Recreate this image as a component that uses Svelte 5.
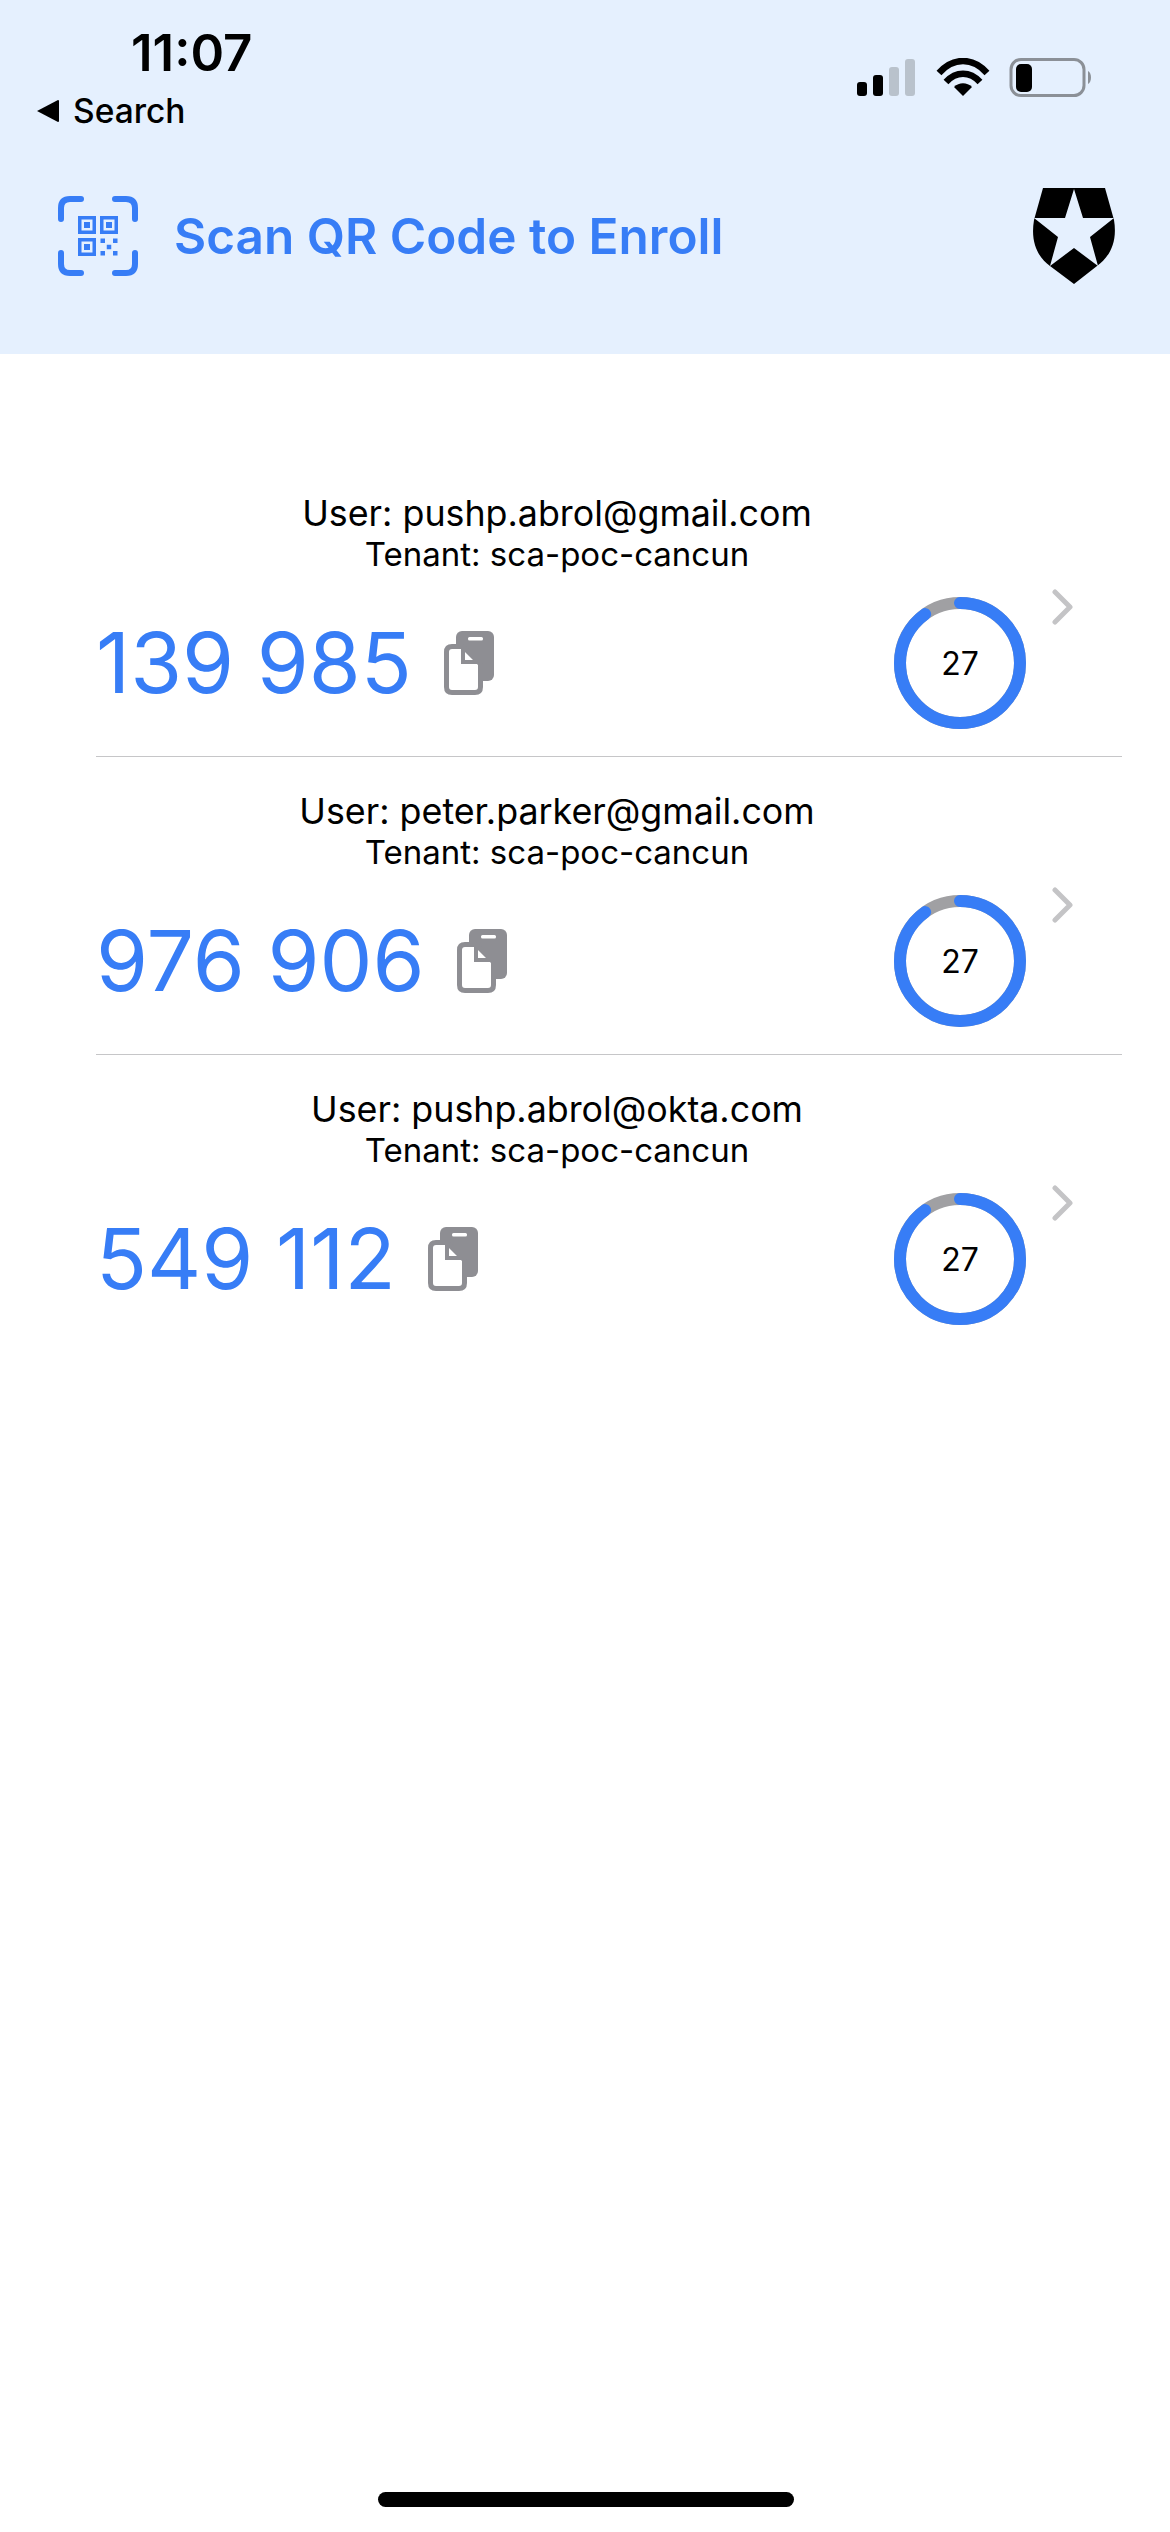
<script>
  const accounts = [
    { user: "pushp.abrol@gmail.com", code: "139 985" },
    { user: "peter.parker@gmail.com", code: "976 906" },
    { user: "pushp.abrol@okta.com", code: "549 112" },
  ];
  const tenant = "sca-poc-cancun";
  const seconds = 27;
  const period = 30;
  const radius = 60;
  const circumference = 2 * Math.PI * radius;
  const dash = (seconds / period) * circumference;

  // little qr modules inside the scan frame
  const qrDots = [
    [42.5, 42.5], [55, 42.5], [48.75, 48.75], [42.5, 55], [55, 55],
  ];
  const qrFinders = [
    [20, 20], [42, 20], [20, 42],
  ];
</script>

<div class="screen">
  <header class="top">
    <div class="status">
      <div class="status-left">
        <div class="time">11:07</div>
        <div class="back">
          <svg class="back-arrow" viewBox="0 0 23 22" width="23" height="22">
            <path d="M0 11 L21 0 Q22 0 22 1 L22 21 Q22 22 21 22 Z" fill="#000" />
          </svg>
          <span>Search</span>
        </div>
      </div>
      <svg class="status-icons" viewBox="0 0 236 40" width="236" height="40">
        <rect x="1" y="24" width="10" height="14" rx="3" fill="#000" />
        <rect x="17" y="17" width="10" height="21" rx="3" fill="#000" />
        <rect x="33" y="9" width="10" height="29" rx="3" fill="#b9c2cc" />
        <rect x="49" y="1" width="10" height="37" rx="3" fill="#b9c2cc" />
        <path d="M83 15 C97 -1 117 -1 131 15" fill="none" stroke="#000" stroke-width="6.5" />
        <path d="M90 24 C100 13 114 13 124 24" fill="none" stroke="#000" stroke-width="6.5" />
        <path d="M107 38 L98 29 C103 24 111 24 116 29 Z" fill="#000" />
        <rect x="155" y="1.500" width="73" height="36" rx="10" fill="none" stroke="#8b9097" stroke-width="3" />
        <rect x="160" y="6" width="16" height="28" rx="5" fill="#000" />
        <path d="M232 13 C236 15 236 24 232 26 Z" fill="#8b9097" />
      </svg>
    </div>
    <div class="nav">
      <svg class="qr" viewBox="0 0 80 80" width="80" height="80">
        <g fill="none" stroke="#377df6" stroke-width="6" stroke-linecap="round">
          <path d="M3 23 V12 Q3 3 12 3 H23" />
          <path d="M57 3 H68 Q77 3 77 12 V23" />
          <path d="M3 57 V68 Q3 77 12 77 H23" />
          <path d="M57 77 H68 Q77 77 77 68 V57" />
        </g>
        {#each qrFinders as [x, y]}
          <rect x={x + 1.75} y={y + 1.75} width="14.500" height="14.500" fill="none" stroke="#377df6" stroke-width="3.500" />
          <rect x={x + 6} y={y + 6} width="6" height="6" fill="#377df6" />
        {/each}
        {#each qrDots as [x, y]}
          <rect {x} {y} width="4.500" height="4.500" fill="#377df6" />
        {/each}
      </svg>
      <span class="title">Scan QR Code to Enroll</span>
      <svg class="shield" viewBox="0 0 84 96" width="84" height="96">
        <path fill="#000" d="M11 0 H73 L82 32 C86 56 76 70 65 78 L42 96 L18 78 C7 70 -2 56 2 32 Z" />
        <path fill="#e5f0fe" d="M42 1 L51 30 H82 L58 49 L66 78 L42 60 L18 78 L26 49 L2 30 H33 Z" />
      </svg>
    </div>
  </header>

  <main class="list">
    {#each accounts as account}
      <section class="row">
        <svg class="chevron" viewBox="0 0 22 36" width="22" height="36">
          <path d="M3 3 L18 18 L3 33" fill="none" stroke="#c4c4c6" stroke-width="5" stroke-linecap="round" stroke-linejoin="round" />
        </svg>
        <div class="labels">
          <div class="user">User: {account.user}</div>
          <div class="tenant">Tenant: {tenant}</div>
        </div>
        <div class="code-line">
          <span class="code">{account.code}</span>
          <svg class="copy" viewBox="0 0 52 64" width="52" height="64">
            <rect x="12" y="0" width="38" height="50" rx="6" fill="#8e8e93" />
            <rect x="24" y="6" width="15" height="3.500" rx="1.500" fill="#fff" />
            <path d="M2.500 21 Q2.500 15.500 8 15.500 H19 L36.500 33 V56 Q36.500 61.500 31 61.500 H8 Q2.500 61.500 2.500 56 Z" fill="#fff" stroke="#8e8e93" stroke-width="5" stroke-linejoin="round" />
            <path d="M19 16 V31 H36" fill="none" stroke="#8e8e93" stroke-width="4" />
          </svg>
          <div class="ring">
            <svg viewBox="0 0 132 132" width="132" height="132">
              <circle cx="66" cy="66" r={radius} fill="none" stroke="#a0a0a3" stroke-width="12" />
              <circle
                cx="66"
                cy="66"
                r={radius}
                fill="none"
                stroke="#377df6"
                stroke-width="12"
                stroke-linecap="round"
                stroke-dasharray="{dash} {circumference}"
                transform="rotate(-90 66 66)"
              />
            </svg>
            <span class="seconds">{seconds}</span>
          </div>
        </div>
      </section>
    {/each}
  </main>

  <div class="home-bar"></div>
</div>

<style>
  :global(body) {
    margin: 0;
    background: #fff;
  }

  .screen {
    position: relative;
    width: 1170px;
    height: 2532px;
    overflow: hidden;
    background: #fff;
    font-family: Inter, "Liberation Sans", sans-serif;
    color: #000;
  }

  .top {
    height: 354px;
    box-sizing: border-box;
    background: #e5f0fe;
  }

  .status {
    display: flex;
    justify-content: space-between;
    align-items: flex-start;
    height: 188px;
    box-sizing: border-box;
    padding: 24px 78px 0 37px;
  }

  .status-left {
    display: flex;
    flex-direction: column;
  }

  .time {
    margin-left: 94px;
    font-size: 51px;
    line-height: 58px;
    font-weight: 600;
  }

  .back {
    display: flex;
    align-items: center;
    gap: 13px;
    margin-top: 6px;
    font-size: 33.5px;
    line-height: 46px;
    font-weight: 500;
  }

  .status-icons {
    margin-top: 34px;
  }

  .nav {
    display: flex;
    align-items: center;
    padding: 0 54px 0 58px;
    height: 96px;
  }

  .qr {
    flex: none;
    margin-right: 36px;
  }

  .title {
    font-size: 49.5px;
    font-weight: 600;
    color: #377df6;
    white-space: nowrap;
  }

  .shield {
    flex: none;
    margin-left: auto;
  }

  .list {
    padding: 105px 48px 0 96px;
  }

  .row {
    position: relative;
    height: 298px;
    box-sizing: border-box;
    padding-top: 34px;
    border-bottom: 1px solid #c6c6c8;
  }

  .row:last-child {
    border-bottom: none;
  }

  .chevron {
    position: absolute;
    top: 130px;
    right: 48px;
  }

  .labels {
    padding-right: 104px;
    text-align: center;
  }

  .user {
    font-size: 35.8px;
    line-height: 41px;
  }

  .tenant {
    font-size: 33px;
    line-height: 41px;
  }

  .code-line {
    display: flex;
    align-items: center;
    margin-top: 22px;
    padding-right: 96px;
  }

  .code {
    font-size: 84px;
    line-height: 132px;
    color: #377df6;
    white-space: nowrap;
    word-spacing: -1px;
  }

  .copy {
    flex: none;
    margin-left: 32px;
  }

  .ring {
    position: relative;
    display: flex;
    align-items: center;
    justify-content: center;
    flex: none;
    width: 132px;
    height: 132px;
    margin-left: auto;
  }

  .ring svg {
    display: block;
  }

  .seconds {
    position: absolute;
    font-size: 32px;
  }

  .home-bar {
    position: absolute;
    left: 378px;
    bottom: 25px;
    width: 416px;
    height: 15px;
    border-radius: 8px;
    background: #000;
  }
</style>
